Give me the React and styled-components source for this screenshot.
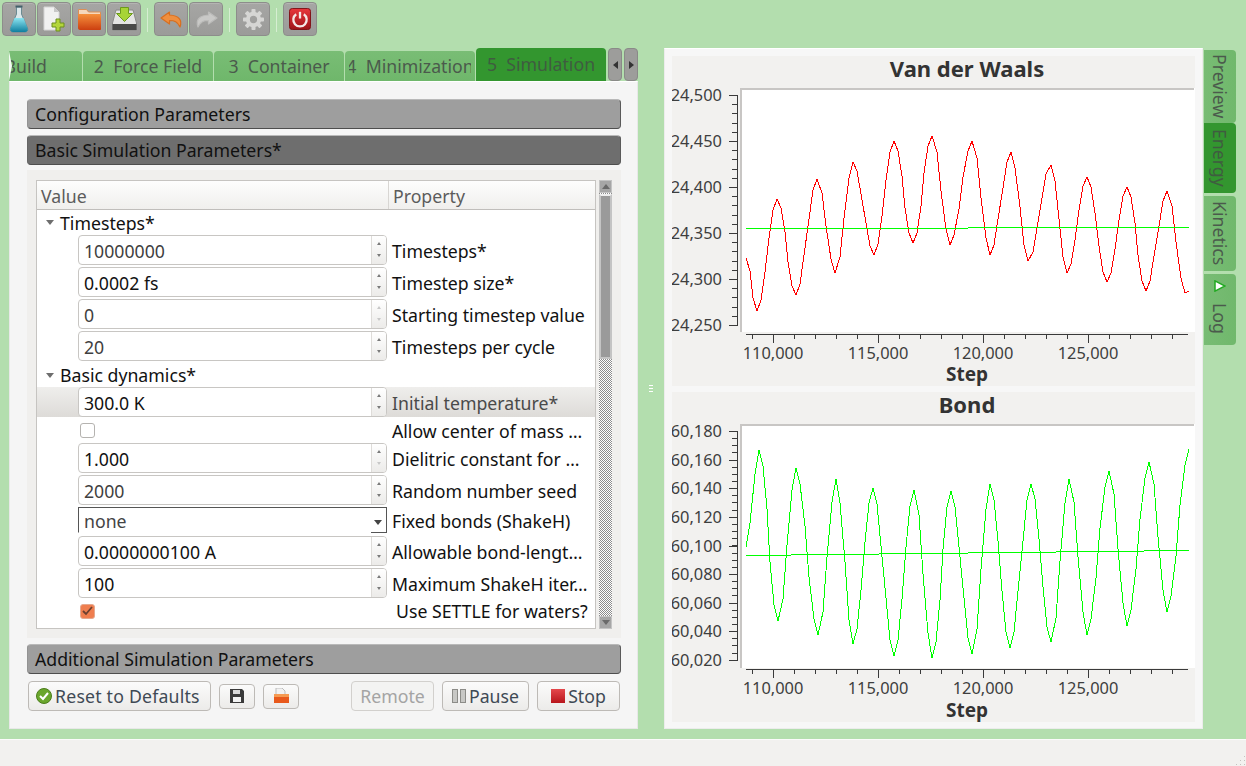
import React from 'react';
import styled, { createGlobalStyle } from 'styled-components';

const FONT = '"Noto Sans", "Open Sans", "Liberation Sans", sans-serif';
const TEXT_SIZE = '17.7px';

const GlobalStyle = createGlobalStyle`
  html, body {
    margin: 0;
    padding: 0;
    background: #b3deae;
  }
  * {
    box-sizing: border-box;
  }
`;

const Page = styled.div`
  display: flex;
  flex-direction: column;
  width: 1246px;
  height: 766px;
  overflow: hidden;
  background: #b3deae;
  font-family: ${FONT};
  font-size: ${TEXT_SIZE};
  color: #3c3c3c;
`;

/* toolbar */

const Toolbar = styled.div`
  display: flex;
  align-items: flex-start;
  gap: 1px;
  height: 48px;
  padding: 2px 0 0 2px;
`;

const ToolButton = styled.div`
  display: flex;
  align-items: center;
  justify-content: center;
  width: 34px;
  height: 34px;
  background: linear-gradient(#a6a6a4, #9b9b99);
  border: 1px solid #8d8d8b;
  border-radius: 4px;
  box-shadow: inset 0 1px 0 #b4b4b2;
`;

const ToolSeparator = styled.div`
  width: 1px;
  height: 24px;
  margin: 6px 5px 0;
  background: #d6eed2;
`;

/* main */

const Main = styled.div`
  display: flex;
  height: 681px;
  margin-bottom: 10px;
  padding-left: 9px;
`;

const LeftColumn = styled.div`
  display: flex;
  flex-direction: column;
  width: 629px;
`;

const TabStrip = styled.div`
  display: flex;
  align-items: flex-end;
  gap: 1px;
  height: 33px;
`;

const Tab = styled.div`
  position: relative;
  display: flex;
  flex: none;
  align-items: center;
  justify-content: ${(p) => (p.$end ? 'flex-end' : 'center')};
  width: ${(p) => p.$w}px;
  height: ${(p) => (p.$active ? 33 : 30)}px;
  padding: ${(p) => (p.$end ? '0 35px 0 0' : p.$active ? '0 4px 2px' : '0 4px')};
  overflow: hidden;
  white-space: pre;
  color: ${(p) => (p.$active ? '#3f5c40' : '#4b5a4c')};
  background: ${(p) => (p.$active ? '#33962f' : 'linear-gradient(#79bd75, #6fb76b)')};
  border-radius: ${(p) => (p.$end ? '0 4px 0 0' : '4px 4px 0 0')};
  &::before {
    content: ${(p) => (p.$end ? "''" : 'none')};
    position: absolute;
    top: 0;
    left: 0;
    width: 3px;
    height: 100%;
    background: #f4fbf3;
    clip-path: polygon(0 0, 100% 50%, 0 100%);
  }
`;

const TabClip = styled.div`
  display: flex;
  justify-content: center;
  width: 100%;
  overflow: hidden;
`;

const TabArrows = styled.div`
  display: flex;
  gap: 2px;
  margin-left: 1px;
`;

const TabArrow = styled.div`
  display: flex;
  align-items: center;
  justify-content: center;
  width: 14px;
  height: 33px;
  background: #9d9d9b;
  border: 1px solid #8a8a88;
  border-radius: 4px;
  &::before {
    content: '';
    border-style: solid;
    border-width: 4px 0 4px 5px;
    border-color: transparent transparent transparent #333;
    transform: ${(p) => (p.$left ? 'scaleX(-1)' : 'none')};
  }
`;

const LeftPanel = styled.div`
  display: flex;
  flex-direction: column;
  height: 648px;
  padding: 17px 16px 0 17px;
  background: #f5f5f5;
  border: 1px solid #e8e8e8;
  border-top-color: #ffffff;
`;

const SectionBar = styled.div`
  display: flex;
  flex: none;
  align-items: center;
  height: 30px;
  margin-bottom: 6px;
  padding: 0 0 1px 7px;
  color: #111111;
  background: ${(p) => (p.$dark ? '#6e6e6e' : '#9e9e9e')};
  border: 1px solid ${(p) => (p.$dark ? '#666666' : '#939393')};
  border-top-color: #b9b9b9;
  border-bottom-color: #4e4e4e;
  border-right-color: #5a5a5a;
  border-radius: 4px;
`;

const Group = styled.div`
  display: flex;
  flex: none;
  gap: 3px;
  height: 468px;
  margin: -1px 0 6px;
  padding: 10px 9px 9px 9px;
  background: #f0efed;
`;

const Table = styled.div`
  display: flex;
  flex-direction: column;
  width: 560px;
  height: 449px;
  overflow: hidden;
  background: #ffffff;
  border: 1px solid #c6c4c1;
`;

const TableHead = styled.div`
  display: flex;
  flex: none;
  height: 29px;
  color: #5c5c5c;
  background: linear-gradient(#fdfdfd, #f0efed);
  border-bottom: 1px solid #c0bebb;
`;

const HeadCell = styled.div`
  display: flex;
  align-items: center;
  width: ${(p) => (p.$value ? '352px' : 'auto')};
  padding: 2px 0 0 4px;
  border-right: ${(p) => (p.$value ? '1px solid #d8d6d3' : 'none')};
`;

const Row = styled.div`
  display: flex;
  flex: none;
  align-items: flex-start;
  height: ${(p) => p.$h}px;
  background: ${(p) => (p.$selected ? 'linear-gradient(#efeeec, #dddbd8)' : 'transparent')};
`;

const GroupRow = styled.div`
  display: flex;
  flex: none;
  align-items: center;
  height: ${(p) => p.$h}px;
  padding-left: 9px;
  color: #111111;
`;

const Disclosure = styled.span`
  width: 0;
  height: 0;
  margin-right: 6px;
  border-style: solid;
  border-width: 5px 4px 0;
  border-color: #6e6e6e transparent transparent;
`;

const ValueCell = styled.div`
  display: flex;
  flex: none;
  align-items: ${(p) => (p.$center ? 'center' : 'flex-start')};
  width: 351px;
  height: 100%;
  padding: ${(p) => (p.$check ? '0 0 0 43px' : '0 0 0 41px')};
`;

const PropertyCell = styled.div`
  display: flex;
  align-items: center;
  height: ${(p) => (p.$tall ? '100%' : '30px')};
  padding: ${(p) => p.$top ?? 2}px 0 ${(p) => p.$bottom ?? 0}px ${(p) => p.$pad}px;
  white-space: nowrap;
  color: ${(p) => (p.$muted ? '#4a4a4a' : '#111111')};
`;

const SpinBox = styled.div`
  display: flex;
  width: 309px;
  height: 30px;
  background: #ffffff;
  border: 1px solid #c8c6c3;
  border-radius: 4px;
`;

const SpinValue = styled.div`
  display: flex;
  flex: 1;
  align-items: center;
  padding: 1px 0 0 5px;
  color: ${(p) => (p.$dark ? '#111111' : '#3f3f3f')};
`;

const SpinButtons = styled.div`
  display: flex;
  flex: none;
  flex-direction: column;
  align-items: center;
  justify-content: space-between;
  width: 15px;
  padding: 6px 0 7px;
  background: linear-gradient(#ffffff, #ecebe9);
  border-left: 1px solid #dedcd9;
  border-radius: 0 3px 3px 0;
`;

const SpinArrow = styled.span`
  width: 0;
  height: 0;
  border-style: solid;
  border-color: transparent;
  border-width: ${(p) => (p.$up ? '0 2.5px 3px' : '3px 2.5px 0')};
  ${(p) => (p.$up ? 'border-bottom-color' : 'border-top-color')}: ${(p) =>
    p.$off ? '#c8c8c8' : '#7a7a7a'};
`;

const ComboBox = styled.div`
  position: relative;
  display: flex;
  align-items: center;
  justify-content: space-between;
  width: 309px;
  height: 26px;
  padding: 1px 4px 0 5px;
  color: #444444;
  background: #ffffff;
  border: 1px solid #555555;
  border-bottom-color: #ffffff;
  &::after {
    content: '';
    position: absolute;
    right: -1px;
    bottom: -1px;
    width: 16px;
    height: 1px;
    background: #555555;
  }
`;

const ComboArrow = styled.span`
  width: 0;
  height: 0;
  margin-top: 3px;
  border-style: solid;
  border-width: 5px 4px 0;
  border-color: #444444 transparent transparent;
`;

const CheckBox = styled.div`
  display: flex;
  align-items: center;
  justify-content: center;
  width: 15px;
  height: 15px;
  background: ${(p) => (p.$on ? '#ef7e4f' : '#ffffff')};
  border: 1px solid ${(p) => (p.$on ? '#e6a98f' : '#b5b3b0')};
  border-radius: 3px;
`;

const ScrollBar = styled.div`
  display: flex;
  flex: none;
  flex-direction: column;
  width: 13px;
  height: 449px;
  background: conic-gradient(#8c8c8c 25%, #ffffff 0 50%, #8c8c8c 0 75%, #ffffff 0) 0 0 / 2px 2px;
`;

const ScrollStep = styled.div`
  display: flex;
  flex: none;
  align-items: center;
  justify-content: center;
  height: 13px;
  background: #a6a6a6;
  border: 1px solid #c4c4c4;
  margin-top: ${(p) => (p.$bottom ? 'auto' : '0')};
  &::before {
    content: '';
    border-style: solid;
    border-color: transparent;
    border-width: ${(p) => (p.$bottom ? '5px 4px 0' : '0 4px 5px')};
    ${(p) => (p.$bottom ? 'border-top-color' : 'border-bottom-color')}: #6a6a6a;
  }
`;

const ScrollThumb = styled.div`
  flex: none;
  height: 165px;
  background: #9a9a9a;
  border: 2px solid #c4c4c4;
  border-top-color: #eeeeee;
  margin-top: 1px;
`;

const ActionRow = styled.div`
  display: flex;
  align-items: center;
  height: 30px;
  margin-top: 1px;
  padding-left: 1px;
`;

const ActionButton = styled.div`
  display: flex;
  flex: none;
  align-items: center;
  justify-content: ${(p) => (p.$start ? 'flex-start' : 'center')};
  gap: 3px;
  width: ${(p) => p.$w}px;
  height: ${(p) => p.$h ?? 30}px;
  margin-right: ${(p) => p.$mr ?? 0}px;
  margin-left: ${(p) => (p.$push ? 'auto' : '0')};
  padding: 0 0 1px ${(p) => (p.$start ? 7 : 0)}px;
  letter-spacing: ${(p) => (p.$start ? '0.2px' : 'normal')};
  color: ${(p) => (p.$disabled ? '#a4a4a4' : '#3f4a55')};
  background: ${(p) => (p.$disabled ? '#f3f3f2' : 'linear-gradient(#fbfbfb, #ecebe9)')};
  border: 1px solid ${(p) => (p.$disabled ? '#d2d0cd' : '#bdbab6')};
  border-radius: 4px;
`;

const Splitter = styled.div`
  display: flex;
  flex: none;
  flex-direction: column;
  align-items: center;
  justify-content: center;
  gap: 2px;
  width: 26px;
`;

const SplitterDash = styled.span`
  width: 4px;
  height: 1px;
  background: #ffffff;
`;

/* charts */

const RightPanel = styled.div`
  display: flex;
  flex: none;
  flex-direction: column;
  gap: 6px;
  width: 539px;
  height: 681px;
  padding: 8px;
  background: #f7f7f7;
  border: 1px solid #ececec;
  border-top-color: #ffffff;
`;

const ChartCard = styled.div`
  display: flex;
  flex: none;
  flex-direction: column;
  width: 523px;
  height: 330px;
  margin-left: -1px;
  margin-top: ${(p) => (p.$first ? '-1px' : '0')};
  background: #f2f1ef;
`;

const ChartTitle = styled.div`
  display: flex;
  flex: none;
  align-items: center;
  justify-content: center;
  height: 32px;
  padding: 0 0 8px 67px;
  color: #333333;
  font-size: 22px;
  font-weight: 700;
`;

const ChartBody = styled.svg`
  display: block;
  flex: none;
  width: 523px;
  height: 274px;
`;

const TickLabel = styled.text`
  font-family: ${FONT};
  font-size: 16.4px;
  fill: #3e3e3e;
`;

const AxisLabel = styled.div`
  display: flex;
  flex: none;
  align-items: center;
  justify-content: center;
  height: 24px;
  padding-left: 67px;
  color: #333333;
  font-size: 19px;
  font-weight: 700;
`;

const SideTabs = styled.div`
  display: flex;
  flex: none;
  flex-direction: column;
  width: 32px;
  margin-left: 1px;
  padding-top: 2px;
`;

const SideTab = styled.div`
  display: flex;
  flex: none;
  align-items: center;
  justify-content: flex-start;
  gap: 11px;
  height: ${(p) => p.$h}px;
  margin-top: ${(p) => p.$gap ?? 0}px;
  padding: ${(p) => p.$pad}px 0 0;
  writing-mode: vertical-rl;
  white-space: nowrap;
  color: ${(p) => (p.$active ? '#3f5c40' : '#4b5a4c')};
  background: ${(p) => (p.$active ? '#33962f' : 'linear-gradient(90deg, #78bc74, #70b86c)')};
  border-radius: 0 4px 4px 0;
`;

const StatusBar = styled.div`
  display: flex;
  flex: 1;
  align-items: flex-end;
  justify-content: flex-end;
  background: #f2f1ef;
  border-top: 1px solid #fbfbfb;
`;

/* drawings */

const FlaskIcon = () => (
  <svg width="20" height="28" viewBox="0 0 20 28">
    <defs>
      <linearGradient id="flaskBody" x1="0" y1="0" x2="0" y2="1">
        <stop offset="0" stopColor="#8be4f0" />
        <stop offset="1" stopColor="#0f7f9f" />
      </linearGradient>
    </defs>
    <path d="M7.500 2h5v7l6 14c.8 2.200-.2 4-2.500 4h-12c-2.300 0-3.300-1.800-2.500-4l6-14z" fill="#dbe7e9" stroke="#6a8a92" />
    <path d="M5.500 13h9l4 10c.8 2.200-.2 4-2.500 4h-12c-2.300 0-3.300-1.800-2.500-4z" fill="url(#flaskBody)" />
    <path d="M6.500 1.500h7" stroke="#44606a" strokeWidth="2" />
  </svg>
);

const NewFileIcon = () => (
  <svg width="22" height="26" viewBox="0 0 22 26">
    <path d="M1 1h10l5 5v18H1z" fill="#f1f1f1" stroke="#d4d4d4" />
    <path d="M11 1v5h5z" fill="#c8c8c8" />
    <path d="M13 13h4v4h4v4h-4v4h-4v-4H9v-4h4z" fill="#b4d63c" stroke="#6c8f1e" />
  </svg>
);

const FolderIcon = () => (
  <svg width="25" height="22" viewBox="0 0 25 22">
    <defs>
      <linearGradient id="folderFill" x1="0" y1="0" x2="0" y2="1">
        <stop offset="0" stopColor="#f5903c" />
        <stop offset="1" stopColor="#cc3f10" />
      </linearGradient>
    </defs>
    <path d="M1.500 1.500h8l2 2.500h12v5h-22z" fill="#f5d8bc" stroke="#d98f58" />
    <path d="M1 6h23v15c0 .5-.5 1-1 1H3c-1 0-2-1-2-2z" fill="url(#folderFill)" />
  </svg>
);

const DriveIcon = () => (
  <svg width="25" height="24" viewBox="0 0 25 24">
    <path d="M4 3h17l3.500 13v7H.5v-7z" fill="#e5e5e3" stroke="#8a8a88" />
    <path d="M.5 17h24v6H.5z" fill="#4a4a48" />
    <path d="M8.500 .5h8v6h4l-8 8-8-8h4z" fill="#a7d436" stroke="#6c9a1c" />
  </svg>
);

const TurnArrow = ({ fill, stroke, flip }) => (
  <svg width="23" height="17" viewBox="0 0 23 17" style={flip ? { transform: 'scaleX(-1)' } : undefined}>
    <path d="M9.500 1L1 7l8.500 6V9.500c5 0 8 1 10.500 6.500 2.500-7-1-11.500-10.500-12z" fill={fill} stroke={stroke} strokeLinejoin="round" strokeWidth="1.200" />
  </svg>
);

const GearIcon = () => (
  <svg width="21" height="21" viewBox="0 0 26 26">
    <g fill="#d6d6d4">
      {[0, 45, 90, 135, 180, 225, 270, 315].map((a) => (
        <rect key={a} x="10.500" y="0" width="5" height="7" rx="1" transform={`rotate(${a} 13 13)`} />
      ))}
    </g>
    <circle cx="13" cy="13" r="7" fill="none" stroke="#d6d6d4" strokeWidth="5" />
  </svg>
);

const PowerIcon = () => (
  <svg width="22" height="22" viewBox="0 0 23 23">
    <defs>
      <linearGradient id="powerFill" x1="0" y1="0" x2="0" y2="1">
        <stop offset="0" stopColor="#e8363c" />
        <stop offset="1" stopColor="#9e1218" />
      </linearGradient>
    </defs>
    <rect x="0.500" y="0.500" width="22" height="22" rx="3" fill="url(#powerFill)" stroke="#7e1015" />
    <path d="M7.500 6.500a7 7 0 1 0 8 0" fill="none" stroke="#f4e6e6" strokeWidth="2.400" />
    <path d="M11.500 4v7" stroke="#f4e6e6" strokeWidth="2.400" />
  </svg>
);

const CheckMark = () => (
  <svg width="11" height="10" viewBox="0 0 11 10">
    <path d="M1 5l3 3 6-7" fill="none" stroke="#6b4030" strokeWidth="1.800" />
  </svg>
);

const ResetIcon = () => (
  <svg width="16" height="16" viewBox="0 0 16 16">
    <circle cx="8" cy="8" r="7.500" fill="#6aa62c" stroke="#4b7d1c" />
    <path d="M4 8l3 3 5-6" fill="none" stroke="#ffffff" strokeWidth="2" />
  </svg>
);

const SaveIcon = () => (
  <svg width="14" height="14" viewBox="0 0 14 14">
    <path d="M0 0h12l2 2v12H0z" fill="#3a3a3a" />
    <rect x="3" y="1" width="7" height="4" fill="#d8d8d8" />
    <rect x="3" y="8" width="8" height="5" fill="#f2f2f2" />
  </svg>
);

const OpenIcon = () => (
  <svg width="17" height="16" viewBox="0 0 17 16">
    <path d="M3 0h6l3 3v5H3z" fill="#f2f2f2" stroke="#bdbdbd" />
    <path d="M1 6h15v9H1z" fill="#e8591c" />
    <path d="M1 6h15v3H1z" fill="#f59a52" />
  </svg>
);

const PauseIcon = () => (
  <svg width="14" height="14" viewBox="0 0 14 14">
    <rect x="0.500" y="0.500" width="5" height="13" fill="#c8c8c5" stroke="#8c8c88" />
    <rect x="8.500" y="0.500" width="5" height="13" fill="#c8c8c5" stroke="#8c8c88" />
  </svg>
);

const StopIcon = () => (
  <svg width="14" height="14" viewBox="0 0 14 14">
    <defs>
      <linearGradient id="stopFill" x1="0" y1="0" x2="0" y2="1">
        <stop offset="0" stopColor="#e5484c" />
        <stop offset="1" stopColor="#b8161c" />
      </linearGradient>
    </defs>
    <rect width="14" height="14" fill="url(#stopFill)" />
  </svg>
);

const LogTriangle = () => (
  <svg width="12" height="12" viewBox="0 0 12 12" style={{ flex: 'none' }}>
    <path d="M1 .9L11 6 1 11.100z" fill="#ffffff" stroke="#22aa22" strokeWidth="1.500" />
  </svg>
);

const ResizeGrip = () => (
  <svg width="12" height="12" viewBox="0 0 12 12">
    {[[10, 2], [10, 6], [6, 6], [10, 10], [6, 10], [2, 10]].map(([x, y]) => (
      <rect key={`${x}-${y}`} x={x} y={y} width="1" height="1" fill="#c4c2bf" />
    ))}
  </svg>
);

/* chart data, screen coordinates of each turning point */

const VDW_TURNS = [
  [746, 258], [757, 311], [777, 199], [796, 295], [817, 179], [835, 273], [853, 162],
  [874, 255], [894, 141], [913, 243], [932, 136], [950, 245], [972, 141], [990, 255],
  [1011, 152], [1028, 261], [1051, 165], [1067, 273], [1087, 177], [1107, 282],
  [1127, 187], [1146, 291], [1167, 191], [1185, 293], [1189, 291]
];

const BOND_TURNS = [
  [746, 547], [759, 450], [778, 621], [796, 468], [818, 635], [836, 479], [853, 644],
  [873, 488], [894, 656], [914, 490], [932, 658], [951, 491], [972, 654], [990, 484],
  [1010, 648], [1031, 484], [1051, 642], [1069, 479], [1087, 635], [1109, 471],
  [1127, 626], [1149, 462], [1167, 612], [1189, 449]
];

const VDW_AVERAGE = [[746, 968, 228], [968, 1189, 227]];

const BOND_AVERAGE = [
  [746, 791, 555], [791, 879, 554], [879, 968, 553],
  [968, 1056, 552], [1056, 1144, 551], [1144, 1189, 550]
];

// walks each stretch between two turning points in steps of about 4px
const sampleTrace = (turns) => {
  const points = [];
  turns.slice(0, -1).forEach(([x0, y0], i) => {
    const [x1, y1] = turns[i + 1];
    const steps = Math.max(1, Math.round((x1 - x0) / 4.2));
    for (let n = 0; n < steps; n += 1) {
      const k = (1 - Math.cos((Math.PI * n) / steps)) / 2;
      points.push(`${Math.round(x0 + ((x1 - x0) * n) / steps)},${Math.round(y0 + (y1 - y0) * k)}`);
    }
  });
  const [xEnd, yEnd] = turns[turns.length - 1];
  points.push(`${xEnd},${yEnd}`);
  return points.join(' ');
};

const X_MAJOR = [
  [773, '110,000'],
  [878, '115,000'],
  [983, '120,000'],
  [1088, '125,000']
];

const Chart = ({ title, first, top, yTicks, minorStep, axisY, turns, average, traceColor }) => {
  const yMajor = yTicks.map((t) => t[0]);
  const yMinor = [];
  for (let y = yMajor[0]; y < yMajor[yMajor.length - 1]; y += minorStep) yMinor.push(y);
  const xMinor = [];
  for (let x = 752; x < 1188; x += 21) xMinor.push(x);

  return (
    <ChartCard $first={first}>
      <ChartTitle>{title}</ChartTitle>
      <ChartBody viewBox={`672 ${top} 523 274`}>
        <rect x="741" y={top} width="454" height="244" fill="#ffffff" />
        <g shapeRendering="crispEdges" fill="#c8c6c4">
          <rect x="740" y={top} width="2" height="244" />
          <rect x="740" y={top} width="454" height="2" />
        </g>
        <g shapeRendering="crispEdges" stroke="#3a3a3a" strokeWidth="1">
          <path d={`M737.5 ${yMajor[0]}V${yMajor[yMajor.length - 1] + 1}`} />
          {yMinor.map((y) => (
            <path key={y} d={`M732 ${Math.round(y) + 0.5}H737`} />
          ))}
          {yMajor.map((y) => (
            <path key={y} d={`M729 ${y + 0.5}H737`} />
          ))}
          <path d={`M746 ${axisY + 0.5}H1188`} />
          {xMinor.map((x) => (
            <path key={x} d={`M${x + 0.5} ${axisY}V${axisY + 5}`} />
          ))}
          {X_MAJOR.map(([x]) => (
            <path key={x} d={`M${x + 0.5} ${axisY}V${axisY + 9}`} />
          ))}
        </g>
        {yTicks.map(([y, label]) => (
          <TickLabel key={label} x="722" y={y + 6} textAnchor="end">
            {label}
          </TickLabel>
        ))}
        {X_MAJOR.map(([x, label]) => (
          <TickLabel key={label} x={x} y={axisY + 25} textAnchor="middle">
            {label}
          </TickLabel>
        ))}
        <polyline
          points={sampleTrace(turns)}
          fill="none"
          stroke={traceColor}
          strokeWidth="1"
          shapeRendering="crispEdges"
        />
        {average.map(([x0, x1, y]) => (
          <path key={x0} d={`M${x0} ${y + 0.5}H${x1}`} stroke="#00ff00" shapeRendering="crispEdges" />
        ))}
      </ChartBody>
      <AxisLabel>Step</AxisLabel>
    </ChartCard>
  );
};

const Spin = ({ value, dark, upOff, downOff }) => (
  <SpinBox>
    <SpinValue $dark={dark}>{value}</SpinValue>
    <SpinButtons>
      <SpinArrow $up $off={upOff} />
      <SpinArrow $off={downOff} />
    </SpinButtons>
  </SpinBox>
);

const SpinRow = ({ h = 32, label, selected, ...spin }) => (
  <Row $h={h} $selected={selected}>
    <ValueCell>
      <Spin {...spin} />
    </ValueCell>
    <PropertyCell $pad={4} $muted={selected}>
      {label}
    </PropertyCell>
  </Row>
);

const App = () => (
  <Page>
    <GlobalStyle />
    <Toolbar>
      <ToolButton><FlaskIcon /></ToolButton>
      <ToolButton><NewFileIcon /></ToolButton>
      <ToolButton><FolderIcon /></ToolButton>
      <ToolButton><DriveIcon /></ToolButton>
      <ToolSeparator />
      <ToolButton><TurnArrow fill="#ef8f3f" stroke="#d86f20" /></ToolButton>
      <ToolButton><TurnArrow fill="#c9c9c7" stroke="#bcbcba" flip /></ToolButton>
      <ToolSeparator />
      <ToolButton><GearIcon /></ToolButton>
      <ToolSeparator />
      <ToolButton><PowerIcon /></ToolButton>
    </Toolbar>

    <Main>
      <LeftColumn>
        <TabStrip>
          <Tab $w={73} $end>1  Build</Tab>
          <Tab $w={130}><TabClip>2  Force Field</TabClip></Tab>
          <Tab $w={130}><TabClip>3  Container</TabClip></Tab>
          <Tab $w={130}><TabClip>4  Minimization</TabClip></Tab>
          <Tab $w={130} $active><TabClip>5  Simulation</TabClip></Tab>
          <TabArrows>
            <TabArrow $left />
            <TabArrow />
          </TabArrows>
        </TabStrip>
        <LeftPanel>
          <SectionBar>Configuration Parameters</SectionBar>
          <SectionBar $dark>Basic Simulation Parameters*</SectionBar>
          <Group>
            <Table>
              <TableHead>
                <HeadCell $value>Value</HeadCell>
                <HeadCell>Property</HeadCell>
              </TableHead>
              <GroupRow $h={25}><Disclosure />Timesteps*</GroupRow>
              <SpinRow value="10000000" label="Timesteps*" />
              <SpinRow value="0.0002 fs" label="Timestep size*" dark />
              <SpinRow value="0" label="Starting timestep value" upOff downOff />
              <SpinRow value="20" label="Timesteps per cycle" />
              <GroupRow $h={24}><Disclosure />Basic dynamics*</GroupRow>
              <SpinRow h={30} value="300.0 K" label="Initial temperature*" dark selected />
              <Row $h={26}>
                <ValueCell $center $check><CheckBox /></ValueCell>
                <PropertyCell $pad={4} $tall>Allow center of mass …</PropertyCell>
              </Row>
              <SpinRow value="1.000" label="Dielitric constant for …" dark downOff />
              <SpinRow value="2000" label="Random number seed" />
              <Row $h={29}>
                <ValueCell>
                  <ComboBox>none<ComboArrow /></ComboBox>
                </ValueCell>
                <PropertyCell $pad={4} $tall $top={0} $bottom={2}>Fixed bonds (ShakeH)</PropertyCell>
              </Row>
              <SpinRow value="0.0000000100 A" label="Allowable bond-lengt…" dark />
              <SpinRow value="100" label="Maximum ShakeH iter…" dark />
              <Row $h={22}>
                <ValueCell $center $check><CheckBox $on><CheckMark /></CheckBox></ValueCell>
                <PropertyCell $pad={8} $tall $top={0}>Use SETTLE for waters?</PropertyCell>
              </Row>
              <GroupRow $h={25}><Disclosure />Ensemble*</GroupRow>
            </Table>
            <ScrollBar>
              <ScrollStep />
              <ScrollThumb />
              <ScrollStep $bottom />
            </ScrollBar>
          </Group>
          <SectionBar>Additional Simulation Parameters</SectionBar>
          <ActionRow>
            <ActionButton $w={183} $mr={8} $start><ResetIcon />Reset to Defaults</ActionButton>
            <ActionButton $w={36} $h={25} $mr={8}><SaveIcon /></ActionButton>
            <ActionButton $w={36} $h={25}><OpenIcon /></ActionButton>
            <ActionButton $w={83} $mr={8} $push $disabled>Remote</ActionButton>
            <ActionButton $w={87} $mr={8}><PauseIcon />Pause</ActionButton>
            <ActionButton $w={83} $mr={1}><StopIcon />Stop</ActionButton>
          </ActionRow>
        </LeftPanel>
      </LeftColumn>

      <Splitter>
        <SplitterDash />
        <SplitterDash />
        <SplitterDash />
      </Splitter>

      <RightPanel>
        <Chart
          first
          title="Van der Waals"
          top={88}
          axisY={334}
          minorStep={9.2}
          yTicks={[[95, '24,500'], [141, '24,450'], [187, '24,400'], [233, '24,350'], [279, '24,300'], [325, '24,250']]}
          turns={VDW_TURNS}
          average={VDW_AVERAGE}
          traceColor="#ff0000"
        />
        <Chart
          title="Bond"
          top={424}
          axisY={669}
          minorStep={7.15}
          yTicks={[
            [431, '60,180'], [460, '60,160'], [488, '60,140'], [517, '60,120'], [546, '60,100'],
            [574, '60,080'], [603, '60,060'], [631, '60,040'], [660, '60,020']
          ]}
          turns={BOND_TURNS}
          average={BOND_AVERAGE}
          traceColor="#00ff00"
        />
      </RightPanel>

      <SideTabs>
        <SideTab $h={73} $pad={4}>Preview</SideTab>
        <SideTab $h={70} $pad={6} $active>Energy</SideTab>
        <SideTab $h={75} $pad={5} $gap={3}>Kinetics</SideTab>
        <SideTab $h={71} $pad={6} $gap={3}><LogTriangle />Log</SideTab>
      </SideTabs>
    </Main>

    <StatusBar>
      <ResizeGrip />
    </StatusBar>
  </Page>
);

export default App;
